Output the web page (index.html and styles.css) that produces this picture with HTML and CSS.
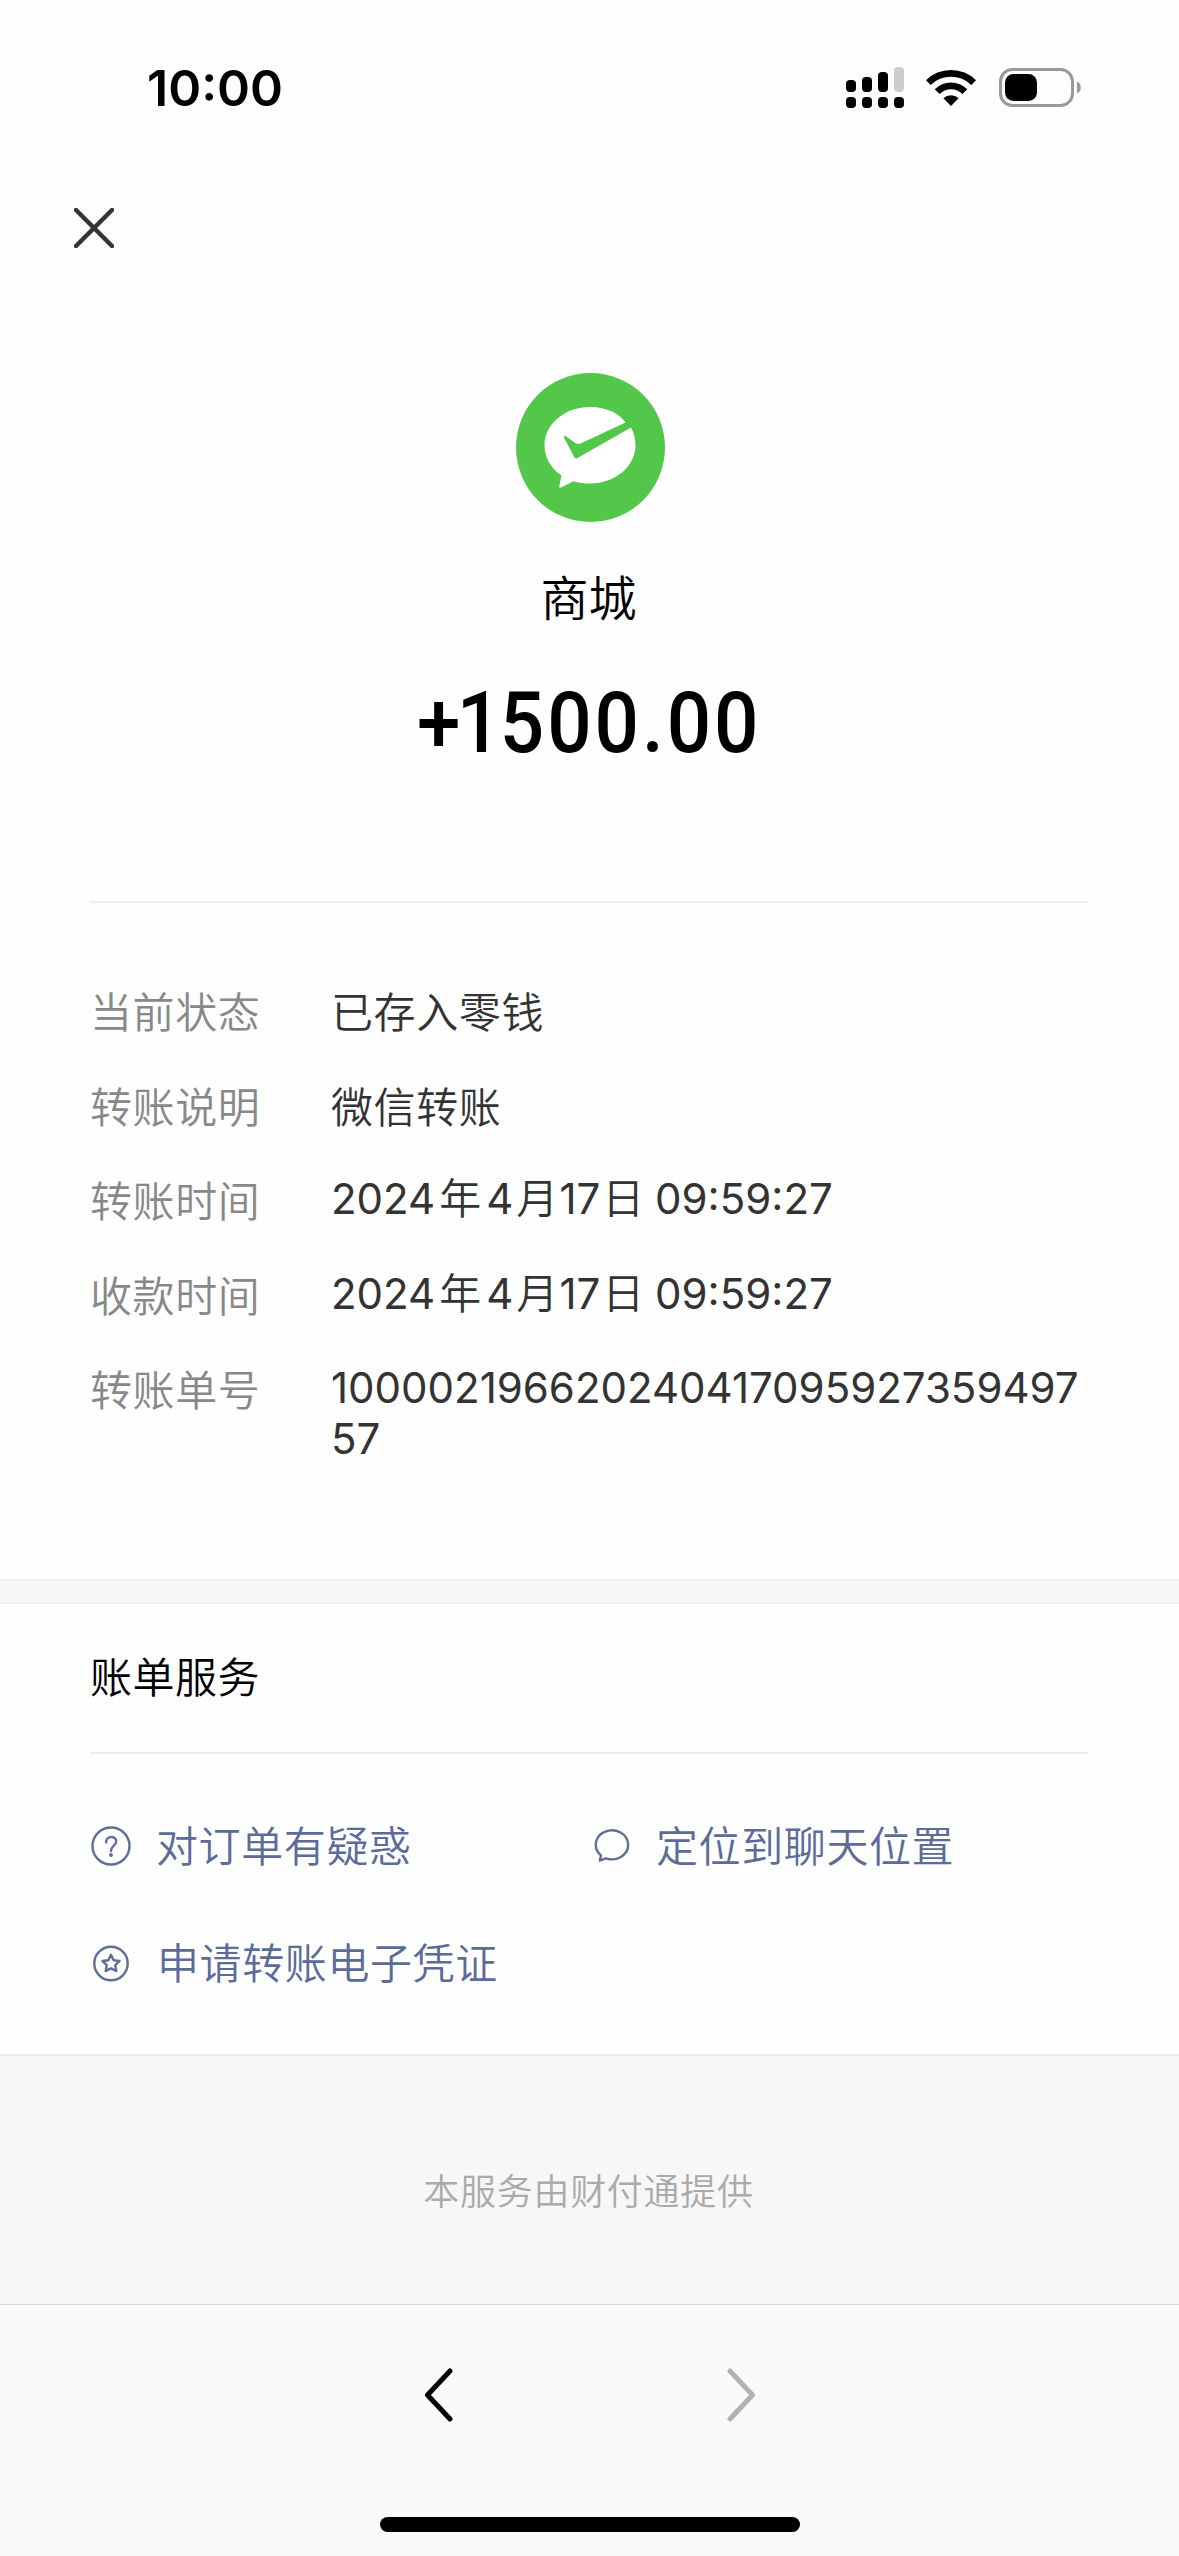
FILE: index.html
```html
<!DOCTYPE html>
<html lang="zh-CN">
<head>
<meta charset="utf-8">
<title>账单详情</title>
<link rel="stylesheet" href="styles.css">
</head>
<body>
<div class="screen">
  <header class="status-bar">
    <span class="clock">10:00</span>
    <div class="status-icons">
      <svg class="signal" viewBox="0 0 58 42" width="58" height="42">
        <rect x="0" y="13" width="10" height="12" rx="4"/>
        <rect x="16" y="10" width="10" height="15" rx="4"/>
        <rect x="32" y="5" width="10" height="20" rx="4"/>
        <rect x="48" y="0" width="10" height="25" rx="4" fill="#ccc"/>
        <rect x="0" y="30" width="10" height="11" rx="4"/>
        <rect x="16" y="30" width="10" height="11" rx="4"/>
        <rect x="32" y="30" width="10" height="11" rx="4"/>
        <rect x="48" y="30" width="10" height="11" rx="4"/>
      </svg>
      <svg class="wifi" viewBox="0 0 50 38" width="50" height="38">
        <path d="M0 11.2A35.5 35.5 0 0 1 50 11.2L45.3 16A28.8 28.8 0 0 0 4.7 16Z"/>
        <path d="M8.7 20.2A23 23 0 0 1 41.3 20.2L36.4 25A16.2 16.2 0 0 0 13.6 25Z"/>
        <path d="M17.4 29.2A11 11 0 0 1 32.6 29.2L25 37Z"/>
      </svg>
      <svg class="battery" viewBox="0 0 83 40" width="83" height="40">
        <rect x="1.5" y="1.5" width="72" height="36" rx="12" fill="none" stroke="#999" stroke-width="3"/>
        <rect x="6" y="6" width="32" height="27" rx="8.5"/>
        <path d="M78 13.5C83 15 83 24 78 25.500Z" fill="#999"/>
      </svg>
    </div>
  </header>

  <div class="title-bar">
    <svg class="close" viewBox="0 0 40 40" width="40" height="40"><path d="M2 2L38 38M38 2L2 38"/></svg>
  </div>

  <section class="summary">
    <svg class="logo" viewBox="0 0 149 149" width="149" height="149">
      <circle cx="74.500" cy="74.500" r="74.500" fill="#52c74a"/>
      <path fill="#fff" d="M74 34C91 34 104 41 109.500 49.500L63.500 71L60 70.500L49.500 63C48.500 62.500 47.500 63.500 48 64.500L58.500 84.500C59 85.500 60 85.800 61 85.300L115 54.500C118 60 119.500 66 119.500 72.500C119.500 93.500 99 110.500 74 110.500C68 110.500 62.500 109.800 57.500 108.200L45 114.500C43.800 115 43 114.500 43.300 113.300L45.500 102.500C35 95.500 28.500 84.500 28.500 72.500C28.500 51 49 34 74 34Z"/>
    </svg>
    <h1 class="payee">商城</h1>
    <p class="amount"><span class="sign">+</span><span class="lead">1</span>500.00</p>
  </section>

  <section class="details">
    <dl class="rows">
      <dt>当前状态</dt><dd class="han">已存入零钱</dd>
      <dt>转账说明</dt><dd class="han">微信转账</dd>
      <dt>转账时间</dt><dd>2024<span class="year">年</span>4<span class="month">月</span>17<span class="day">日</span> 09:59:27</dd>
      <dt>收款时间</dt><dd>2024<span class="year">年</span>4<span class="month">月</span>17<span class="day">日</span> 09:59:27</dd>
      <dt>转账单号</dt><dd class="serial">10000219662024041709592735949757</dd>
    </dl>
  </section>

  <section class="services">
    <h2 class="services-title">账单服务</h2>
    <div class="links">
      <a class="link">
        <svg viewBox="0 0 40 40" width="40" height="40"><circle cx="20" cy="20" r="18.500"/><path d="M15.200 16.200C15.200 9.300 25.200 9.500 25.200 15.400C25.200 19.500 20 19.800 20 25"/><circle class="dot" cx="20" cy="29" r="1.900"/></svg>
        <span>对订单有疑惑</span>
      </a>
      <a class="link">
        <svg viewBox="0 0 40 40" width="40" height="40"><path d="M10 29.500A16.200 14.500 0 1 1 15 32.300L8.800 34.500Z"/></svg>
        <span>定位到聊天位置</span>
      </a>
      <a class="link voucher">
        <svg viewBox="0 0 40 40" width="40" height="40"><circle cx="20" cy="20.500" r="16.700"/><path d="M20 11.800L22.600 17.200L28.600 18L24.300 22.200L25.300 28.100L20 25.300L14.700 28.100L15.700 22.200L11.400 18L17.400 17.200Z"/></svg>
        <span>申请转账电子凭证</span>
      </a>
    </div>
  </section>

  <footer class="provider">本服务由财付通提供</footer>

  <nav class="toolbar">
    <div class="arrows">
      <svg viewBox="0 0 30 54" width="30" height="54"><path d="M26 3L3.500 27L26 51"/></svg>
      <svg class="disabled" viewBox="0 0 30 54" width="30" height="54"><path d="M4 3L26.500 27L4 51"/></svg>
    </div>
    <div class="home-bar"></div>
  </nav>
</div>
</body>
</html>
```
FILE: styles.css
```css
*, *::before { box-sizing: border-box; margin: 0; padding: 0; }

body {
  background: #fefefe;
  font-family: "Noto Sans CJK SC", sans-serif;
  font-weight: 350;
  color: #000;
}

.screen {
  width: 1179px;
  height: 2556px;
  display: flex;
  flex-direction: column;
  overflow: hidden;
}

svg { display: block; flex: none; }

.status-bar {
  height: 176px;
  padding: 0 97px 0 147px;
  display: flex;
  justify-content: space-between;
}

.clock {
  padding-top: 58px;
  font: 600 50px/60px Inter, sans-serif;
}

.status-icons {
  display: flex;
  align-items: flex-start;
  padding-top: 67px;
}

.wifi { margin: 2px 23px 0 22px; }
.battery { margin-top: 1px; }

.title-bar { height: 197px; padding: 32px 0 0 74px; }

.close {
  stroke: #333;
  stroke-width: 4.5;
  stroke-linecap: round;
}

.summary {
  height: 530px;
  margin: 0 90px;
  border-bottom: 2px solid #eee;
  display: flex;
  flex-direction: column;
  align-items: center;
}

.logo { margin-left: 2px; }

.payee {
  margin-top: 38px;
  margin-right: 2px;
  font-size: 48px;
  font-weight: 350;
  line-height: 70px;
}

.amount {
  margin-top: 43px;
  font: 500 85px/100px Roboto, sans-serif;
  letter-spacing: 3.2px;
  transform: scaleX(0.92);
}

.sign { letter-spacing: -4px; }
.lead { letter-spacing: -1.5px; }

.details {
  height: 676px;
  padding: 81px 90px 0;
}

.rows {
  display: grid;
  grid-template-columns: 241px 750px;
  row-gap: 43.6px;
  font-size: 42px;
  line-height: 51px;
}

dt { color: #888; }

dd {
  color: #333;
  font-family: Inter, "Noto Sans CJK SC", sans-serif;
  font-weight: 400;
}

.han { font-family: "Noto Sans CJK SC", sans-serif; }
.han, .year, .month, .day { font-weight: 350; }
dt, .han { letter-spacing: 0.6px; }
.year { margin: 0 5px 0 4px; }
.month { margin: 0 1px 0 3px; }
.day { margin: 0 -1px 0 2px; }
.serial { overflow-wrap: anywhere; }

.services {
  height: 475px;
  color: #5c6b98;
}

.services::before {
  content: "";
  display: block;
  height: 25px;
  background: #f7f7f7;
  border: solid #efefef;
  border-width: 2px 0;
}

.services-title {
  height: 150px;
  margin: 0 90px;
  border-bottom: 2px solid #eee;
  color: #000;
  font-size: 42px;
  font-weight: 350;
  letter-spacing: 0.5px;
  line-height: 142px;
}

.links {
  padding: 60px 90px 0;
  display: grid;
  grid-template-columns: 500px 1fr;
  row-gap: 57px;
  font-size: 42px;
  line-height: 60px;
  letter-spacing: 0.6px;
}

.link { display: flex; align-items: center; gap: 25px; }
.voucher { grid-column: 1 / -1; gap: 26px; }

.link svg {
  margin: 4px 0 0 1px;
  fill: none;
  stroke: #5f6e98;
  stroke-width: 2.4;
  stroke-linejoin: round;
  stroke-linecap: round;
}

.link .dot { fill: #5f6e98; stroke: none; }

.provider {
  height: 250px;
  padding-right: 2px;
  border-top: 2px solid #ececec;
  background: #f7f7f7;
  color: #aaa;
  font-size: 36px;
  letter-spacing: 0.7px;
  line-height: 267px;
  text-align: center;
}

.toolbar {
  flex: 1;
  border-top: 1px solid #d9d9d9;
  background: #fafafc;
}

.arrows {
  display: flex;
  justify-content: space-between;
  width: 332px;
  margin: 63px auto 0;
}

.arrows path {
  fill: none;
  stroke: #000;
  stroke-width: 5;
  stroke-linecap: round;
  stroke-linejoin: round;
}

.arrows .disabled path { stroke: #b2b2b2; }

.home-bar {
  width: 420px;
  height: 15px;
  margin: 95px auto 0;
  border-radius: 8px;
  background: #000;
}
```
